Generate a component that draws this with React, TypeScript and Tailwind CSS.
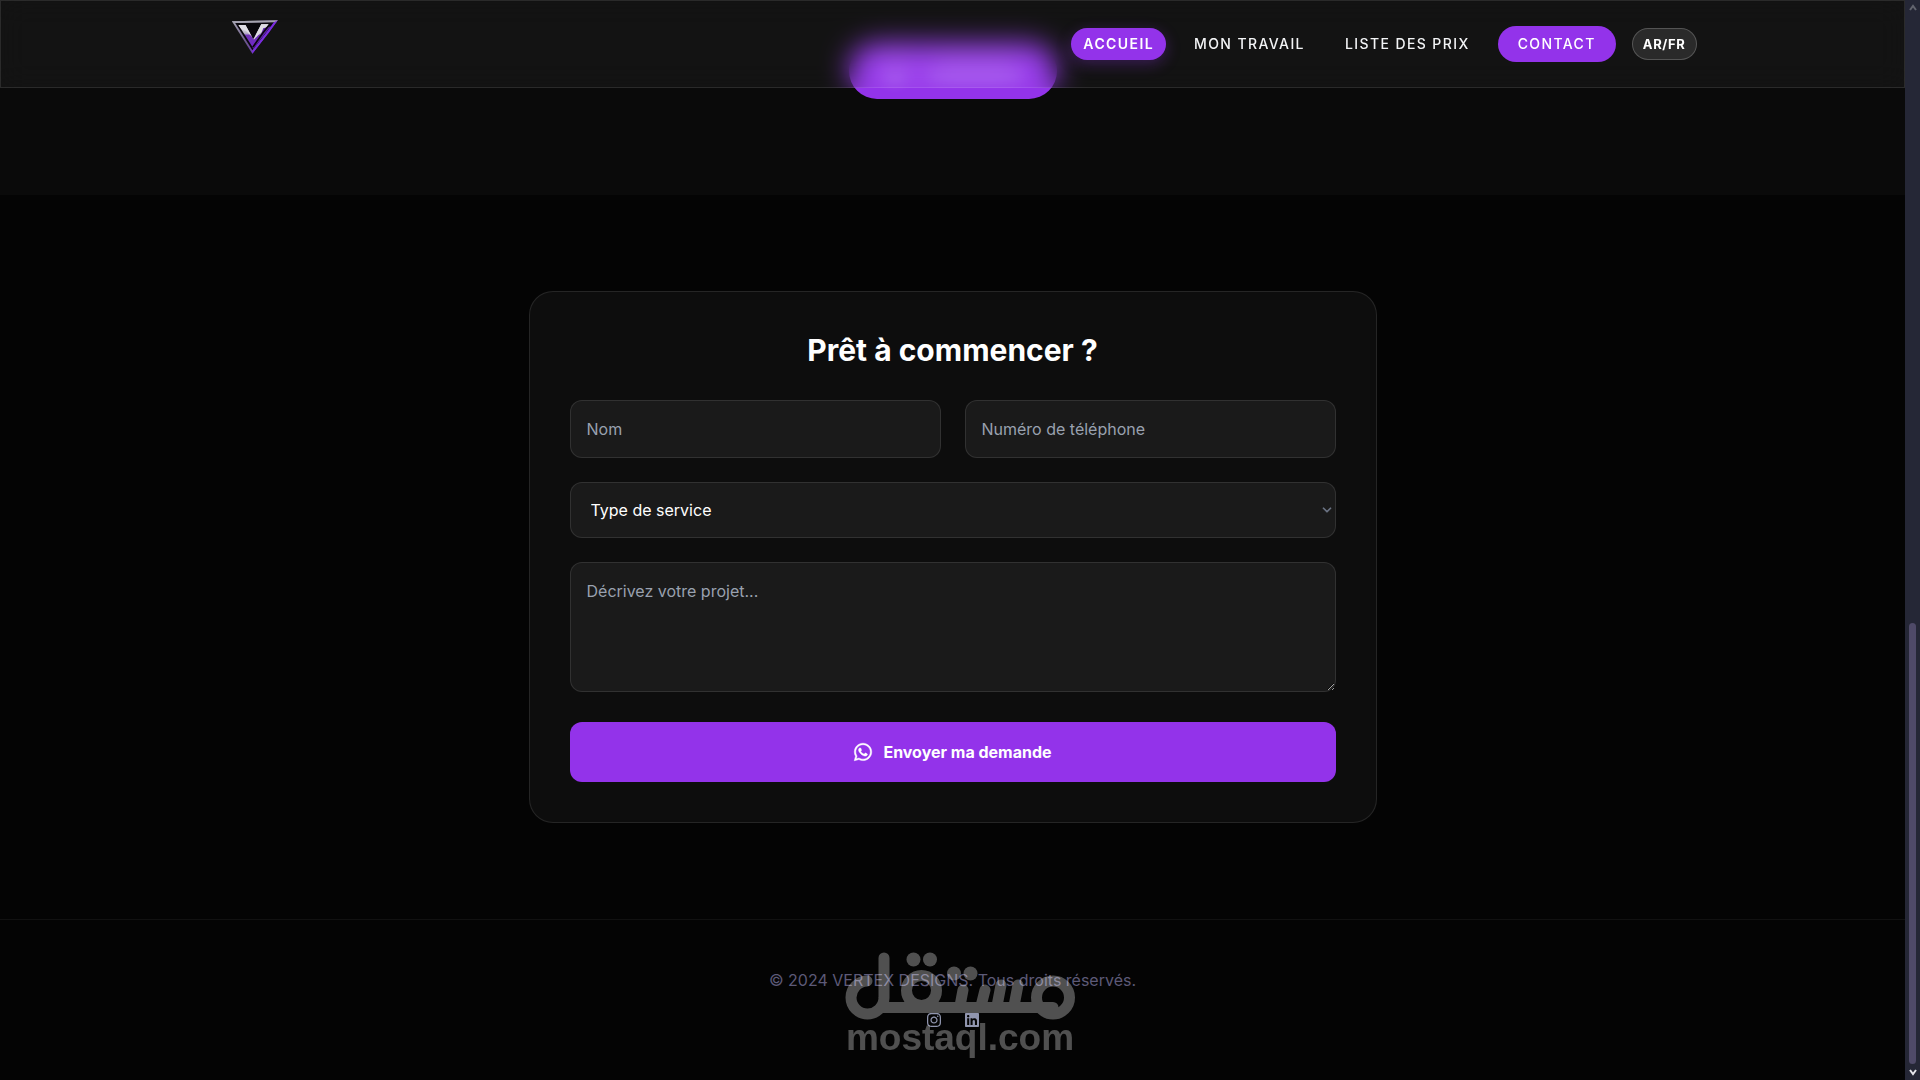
import { ChevronDown } from "lucide-react";
import { FaInstagram, FaLinkedin, FaWhatsapp } from "react-icons/fa";

const links = [
  { label: "ACCUEIL", href: "#accueil", active: true },
  { label: "MON TRAVAIL", href: "#travail", active: false },
  { label: "LISTE DES PRIX", href: "#prix", active: false },
];

const field =
  "w-full rounded-xl border border-white/10 bg-[#1a1a1a] text-base text-white placeholder:text-gray-400";

function Logo() {
  return (
    <svg viewBox="94 59 142 103" className="w-12 h-[34px]" role="img" aria-label="Vertex Designs">
      <defs>
        <linearGradient id="rim" x1="0" y1="0" x2="1" y2="1">
          <stop offset="0" stopColor="#a9a9b5" />
          <stop offset="0.45" stopColor="#6d5a8c" />
          <stop offset="1" stopColor="#6b21c8" />
        </linearGradient>
        <linearGradient id="blade" x1="0" y1="0" x2="0" y2="1">
          <stop offset="0" stopColor="#f3f1f6" />
          <stop offset="0.4" stopColor="#b9b3c6" />
          <stop offset="0.5" stopColor="#6f32b4" />
          <stop offset="1" stopColor="#7028c8" />
        </linearGradient>
      </defs>
      <path d="M95 63 L234 60 L157 161 Z" fill="url(#rim)" />
      <path d="M105 68 L225 65 L157 151 Z" fill="#09070d" />
      <path d="M95 63 L234 60 L229 66 L100 68 Z" fill="#a5a3b0" />
      <path d="M234 60 L207 98 L157 161 L157 153 L203 92 L222 66 Z" fill="#7a2be0" />
      <path d="M115 74 L136 74 L160 117 L184 72 L207 72 L157 140 Z" fill="url(#blade)" />
      <path d="M136 74 L160 117 L184 72 L207 72 L162 118 L152 106 L138 92 L124 86 L115 74 Z" fill="#dedce4" />
      <path d="M213 78 L190 84 L184 101 L157 141 L160 147 Z" fill="#5b21a8" />
      <path d="M209 73 L188 99 L159 141" fill="none" stroke="#09070d" strokeWidth="5" />
    </svg>
  );
}

function Header() {
  return (
    <header className="absolute inset-x-0 top-0 z-10 border border-white/10 bg-white/4 backdrop-blur-[14px]">
      <div className="max-w-[1536px] h-[86px] mx-auto px-6 flex items-center justify-between">
        <a href="#accueil" className="self-start flex w-[92px] justify-center pt-[19px]">
          <Logo />
        </a>
        <nav className="flex items-center gap-4 text-sm font-medium tracking-widest text-gray-100">
          {links.map((link) => (
            <a
              key={link.label}
              href={link.href}
              className={
                link.active
                  ? "rounded-full bg-[#9333ea] px-3 py-1.5 font-semibold text-white shadow-[0_4px_15px_rgba(147,51,234,0.3)]"
                  : "rounded-full px-3 py-1.5"
              }
            >
              {link.label}
            </a>
          ))}
          <a href="#contact" className="rounded-full bg-[#9333ea] px-5 py-2 text-white">
            CONTACT
          </a>
          <button
            type="button"
            className="h-8 rounded-full border border-white/20 bg-white/10 px-2.5 text-[13px] font-bold tracking-wider text-white"
          >
            AR/FR
          </button>
        </nav>
      </div>
    </header>
  );
}

function ContactForm() {
  return (
    <section id="contact" className="bg-[#040404] py-24">
      <div className="max-w-4xl mx-auto px-6">
        <div className="rounded-3xl border border-white/10 bg-[#0d0d0d] p-10">
          <h2 className="text-3xl font-bold text-white text-center mb-8">Prêt à commencer ?</h2>
          <form className="space-y-6">
            <div className="grid grid-cols-1 md:grid-cols-2 gap-6">
              <input type="text" aria-label="Nom" placeholder="Nom" className={`${field} p-4`} />
              <input
                type="tel"
                aria-label="Numéro de téléphone"
                placeholder="Numéro de téléphone"
                className={`${field} p-4`}
              />
            </div>
            <div className="relative">
              <select aria-label="Type de service" className={`${field} block h-14 appearance-none px-5`}>
                <option>Type de service</option>
              </select>
              <ChevronDown
                className="pointer-events-none absolute right-0.5 top-1/2 -translate-y-1/2 w-3.5 h-3.5 text-gray-500"
                strokeWidth={3}
              />
            </div>
            <div className="pb-1.5">
              <textarea
                rows={4}
                aria-label="Décrivez votre projet"
                placeholder="Décrivez votre projet..."
                className={`${field} block p-4`}
              />
            </div>
            <button
              type="submit"
              className="w-full h-[60px] rounded-xl bg-[#9333ea] text-base font-bold text-white flex items-center justify-center gap-2.5"
            >
              <FaWhatsapp className="w-5 h-5" strokeWidth={12} stroke="currentColor" />
              Envoyer ma demande
            </button>
          </form>
        </div>
      </div>
    </section>
  );
}

function Footer() {
  return (
    <footer className="border-t border-white/5 bg-[#040404] py-12 text-center">
      <p className="text-base text-[#5d5a78]">© 2024 VERTEX DESIGNS. Tous droits réservés.</p>
      <div className="mt-4 h-6 flex items-center justify-center gap-6 text-[#9095ae]">
        <a href="#instagram" aria-label="Instagram">
          <FaInstagram className="w-3.5 h-4" />
        </a>
        <a href="#linkedin" aria-label="LinkedIn">
          <FaLinkedin className="w-3.5 h-4" />
        </a>
      </div>
    </footer>
  );
}

function Watermark() {
  return (
    <div className="pointer-events-none absolute inset-x-0 bottom-5 z-20 flex flex-col items-center opacity-30 text-white">
      <svg viewBox="0 0 230 68" className="w-[230px] h-[68px]" role="img" aria-label="mostaql">
        <g fill="none" stroke="currentColor" strokeWidth="11" strokeLinecap="round">
          <path d="M22 29 A16.5 16.5 0 1 0 39 46 V6" />
          <path d="M36 55.5 H208" />
          <circle cx="76.5" cy="38.5" r="15" />
          <path d="M118 38 L115 54 M140 38 L136 54 M156 33 L152 54 M173 33 L169 54" />
          <circle cx="208" cy="45.5" r="16.5" />
        </g>
        <g fill="currentColor">
          <circle cx="68.5" cy="7.5" r="7" />
          <circle cx="85" cy="7.5" r="7" />
          <circle cx="109" cy="21.5" r="7" />
          <circle cx="125.5" cy="21.5" r="7" />
        </g>
      </svg>
      <span className="font-['Liberation_Sans',sans-serif] text-[37px] leading-9 pb-1 font-bold">mostaql.com</span>
    </div>
  );
}

function ScrollTrack() {
  return (
    <div className="w-[15px] shrink-0 bg-[#252736] flex flex-col items-center py-1" aria-hidden="true">
      <svg viewBox="0 0 8 8" className="w-2 h-2" fill="none" stroke="#62646e" strokeWidth="2">
        <path d="M1 6 L4 2 L7 6" />
      </svg>
      <div className="grow-[611]" />
      <div className="w-[7px] grow-[441] rounded-full bg-[#4f4a68]" />
      <svg viewBox="0 0 8 8" className="w-2 h-2 mt-1" fill="none" stroke="#e5e5ea" strokeWidth="2">
        <path d="M1 2 L4 6 L7 2" />
      </svg>
    </div>
  );
}

export default function App() {
  return (
    <div className="relative flex min-h-screen bg-[#040404] font-['Inter',sans-serif]">
      <div className="relative flex-1">
        <Header />
        <section className="bg-[#0a0a0a] pt-[43px] pb-24 flex justify-center">
          <a
            href="#contact"
            aria-label="Contact"
            className="h-14 w-[208px] rounded-full bg-[#9333ea] flex items-center justify-center gap-5"
          >
            <span className="w-6 h-6 rounded-full bg-white/25 blur-[6px]" />
            <span className="w-24 h-4 rounded-full bg-white/25 blur-[6px]" />
          </a>
        </section>
        <ContactForm />
        <Footer />
      </div>
      <ScrollTrack />
      <Watermark />
    </div>
  );
}
